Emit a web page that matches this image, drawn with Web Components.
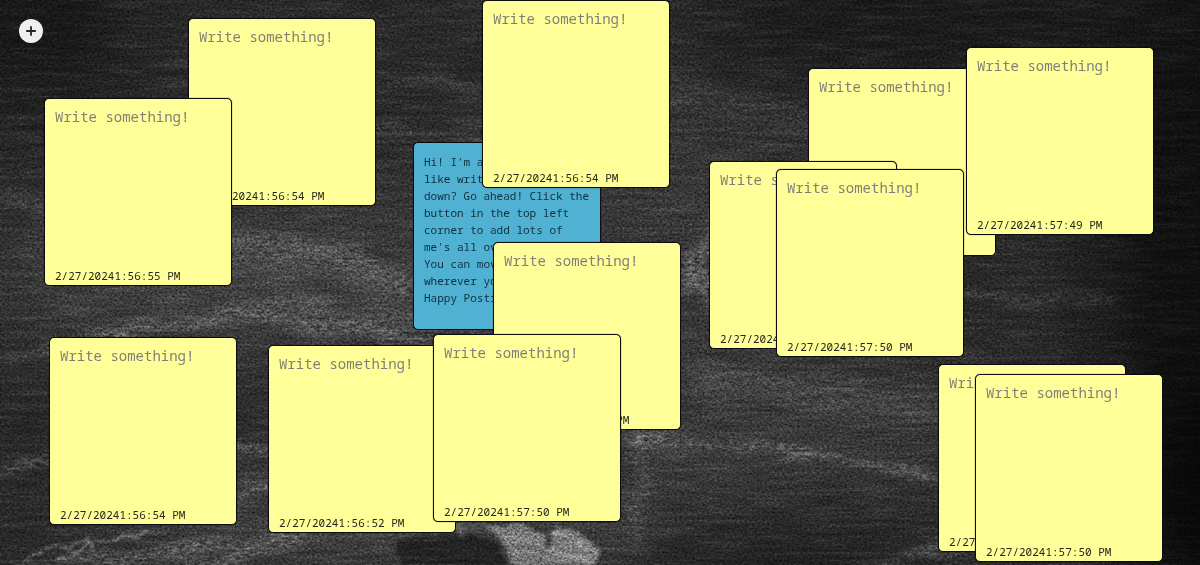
<!DOCTYPE html>
<html lang="en">
<head>
<meta charset="utf-8">
<meta name="viewport" content="width=device-width, initial-scale=1">
<title>Sticky notes</title>
<style>
  body { margin: 0; background: #222; font-family: "Noto Sans Mono", "DejaVu Sans Mono", monospace; }
</style>
</head>
<body>
<note-board>
  <add-button slot="action"></add-button>
  <sticky-note x="188" y="18" stamp="2/27/20241:56:54 PM"></sticky-note>
  <sticky-note x="44" y="98" stamp="2/27/20241:56:55 PM"></sticky-note>
  <sticky-note x="413" y="142" tone="blue">Hi! I'm a Post-It! Feel
like writing something
down? Go ahead! Click the
button in the top left
corner to add lots of
me's all over the page.
You can move me around
wherever you'd like.
Happy Posting!</sticky-note>
  <sticky-note x="482" y="0" stamp="2/27/20241:56:54 PM"></sticky-note>
  <sticky-note x="493" y="242" stamp="2/27/20241:56:53 PM"></sticky-note>
  <sticky-note x="49" y="337" stamp="2/27/20241:56:54 PM"></sticky-note>
  <sticky-note x="268" y="345" stamp="2/27/20241:56:52 PM"></sticky-note>
  <sticky-note x="433" y="334" stamp="2/27/20241:57:50 PM"></sticky-note>
  <sticky-note x="808" y="68" stamp="2/27/20241:57:49 PM"></sticky-note>
  <sticky-note x="709" y="161" stamp="2/27/20241:57:50 PM"></sticky-note>
  <sticky-note x="776" y="169" stamp="2/27/20241:57:50 PM"></sticky-note>
  <sticky-note x="966" y="47" stamp="2/27/20241:57:49 PM"></sticky-note>
  <sticky-note x="938" y="364" stamp="2/27/20241:57:50 PM"></sticky-note>
  <sticky-note x="975" y="374" stamp="2/27/20241:57:50 PM"></sticky-note>
</note-board>

<script>
class ChalkBackground extends HTMLElement {
  constructor() {
    super();
    this.attachShadow({ mode: "open" }).innerHTML = `
      <style>
        :host { display: block; }
        svg { display: block; width: 100%; height: 100%; }
        .drag { mix-blend-mode: soft-light; opacity: .25; }
        .grain { mix-blend-mode: overlay; opacity: .5; }
      </style>
      <svg viewBox="0 0 1200 565" preserveAspectRatio="xMidYMid slice" aria-hidden="true">
        <defs>
          <filter id="soft" x="-200" y="-200" width="1600" height="965" filterUnits="userSpaceOnUse" color-interpolation-filters="sRGB"><feGaussianBlur stdDeviation="40"/></filter>
          <filter id="mist" x="0" y="0" width="1200" height="565" filterUnits="userSpaceOnUse" color-interpolation-filters="sRGB">
            <feTurbulence type="fractalNoise" baseFrequency="0.015 0.06" numOctaves="3" seed="4" result="warp"/>
            <feDisplacementMap in="SourceGraphic" in2="warp" scale="26" xChannelSelector="R" yChannelSelector="G" result="bent"/>
            <feGaussianBlur in="bent" stdDeviation="6 4" result="fuzzy"/>
            <feTurbulence type="fractalNoise" baseFrequency="0.14 0.34" numOctaves="4" seed="9"/>
            <feColorMatrix values="0 0 0 0 1  0 0 0 0 1  0 0 0 0 1  2.0 0 0 0 -0.5" result="dust"/>
            <feComposite in="fuzzy" in2="dust" operator="in"/>
          </filter>
          <filter id="chalk" x="0" y="0" width="1200" height="565" filterUnits="userSpaceOnUse" color-interpolation-filters="sRGB">
            <feTurbulence type="fractalNoise" baseFrequency="0.05 0.09" numOctaves="3" seed="7" result="warp"/>
            <feDisplacementMap in="SourceGraphic" in2="warp" scale="14" xChannelSelector="R" yChannelSelector="G" result="bent"/>
            <feGaussianBlur in="bent" stdDeviation="1.5"/>
          </filter>
          <filter id="grain" x="0" y="0" width="1200" height="565" filterUnits="userSpaceOnUse" color-interpolation-filters="sRGB">
            <feTurbulence type="fractalNoise" baseFrequency="0.4 0.5" numOctaves="3" seed="21"/>
            <feColorMatrix values="1.5 0 0 0 -0.25  1.5 0 0 0 -0.25  1.5 0 0 0 -0.25  0 0 0 0 1"/>
          </filter>
          <filter id="drag" x="0" y="0" width="1200" height="565" filterUnits="userSpaceOnUse" color-interpolation-filters="sRGB">
            <feTurbulence type="fractalNoise" baseFrequency="0.02 0.25" numOctaves="3" seed="13"/>
            <feColorMatrix values="1.4 0 0 0 -0.2  1.4 0 0 0 -0.2  1.4 0 0 0 -0.2  0 0 0 0 1"/>
          </filter>
        </defs>
        <rect width="1200" height="565" fill="#2a2a2a"/>
        <g filter="url(#soft)">
          <ellipse cx="280" cy="280" rx="300" ry="80" fill="#414141"/>
          <ellipse cx="620" cy="230" rx="240" ry="130" fill="#383838"/>
          <ellipse cx="430" cy="520" rx="360" ry="60" fill="#404040"/>
          <ellipse cx="790" cy="420" rx="190" ry="80" fill="#3a3a3a"/>
          <ellipse cx="20" cy="20" rx="110" ry="80" fill="#171717"/>
          <ellipse cx="1220" cy="200" rx="120" ry="420" fill="#101010"/>
          <ellipse cx="960" cy="20" rx="260" ry="60" fill="#191919"/>
          <ellipse cx="760" cy="560" rx="130" ry="40" fill="#1c1c1c"/>
          <ellipse cx="1210" cy="500" rx="90" ry="120" fill="#080808"/>
        </g>
        <g filter="url(#mist)" fill="none" stroke-linecap="round">
          <path d="M-20 190Q120 230 250 240T480 335" stroke="#aaa" stroke-opacity=".25" stroke-width="20"/>
          <path d="M225 260Q330 240 420 300" stroke="#aaa" stroke-opacity=".2" stroke-width="40"/>
          <path d="M-10 365Q110 330 190 322T430 345" stroke="#bbb" stroke-opacity=".5" stroke-width="8"/>
          <path d="M225 310Q330 300 440 340" stroke="#bbb" stroke-opacity=".25" stroke-width="24"/>
          <path d="M-10 478Q60 450 130 450T440 455" stroke="#bbb" stroke-opacity=".5" stroke-width="10"/>
          <path d="M235 495Q250 480 290 485" stroke="#aaa" stroke-opacity=".35" stroke-width="14"/>
          <path d="M0 575Q120 560 210 545T480 525M140 575Q250 560 300 535" stroke="#bbb" stroke-opacity=".45" stroke-width="11"/>
          <path d="M685 290Q705 240 730 205M695 270Q705 285 730 320" stroke="#ddd" stroke-opacity=".45" stroke-width="16"/>
          <path d="M630 435Q760 445 850 460T940 475" stroke="#ccc" stroke-opacity=".5" stroke-width="10"/>
          <path d="M700 375Q800 395 930 405" stroke="#aaa" stroke-opacity=".2" stroke-width="36"/>
          <path d="M636 440L640 550" stroke="#bbb" stroke-opacity=".3" stroke-width="12"/>
          <path d="M960 290Q1040 298 1110 305" stroke="#aaa" stroke-opacity=".35" stroke-width="12"/>
          <path d="M378 130Q430 132 480 142M376 80L480 90" stroke="#aaa" stroke-opacity=".3" stroke-width="8"/>
          <path d="M670 90Q740 100 810 125" stroke="#aaa" stroke-opacity=".15" stroke-width="32"/>
          <path d="M860 575Q910 540 980 555" stroke="#aaa" stroke-opacity=".4" stroke-width="9"/>
        </g>
        <g filter="url(#chalk)">
          <path d="M478 522L520 524Q546 530 546 545Q545 558 530 570L512 570Q514 540 478 522Z" fill="#bbb" fill-opacity=".5"/>
          <path d="M555 524Q590 530 600 552L592 570L528 570Q550 560 555 524Z" fill="#bbb" fill-opacity=".5"/>
          <path d="M552 532Q580 540 598 556M542 548Q565 548 588 568" fill="none" stroke="#ddd" stroke-opacity=".6" stroke-width="2"/>
          <path d="M395 540Q460 525 500 545L508 570H400Z" fill="#0c0c0c" fill-opacity=".5"/>
          <path d="M20 562Q50 545 90 540T165 532M52 548L82 553M88 535L96 560M60 560L95 545" fill="none" stroke="#ddd" stroke-opacity=".45" stroke-width="2"/>
        </g>
        <rect class="drag" width="1200" height="565" filter="url(#drag)"/>
        <rect class="grain" width="1200" height="565" filter="url(#grain)"/>
      </svg>`;
  }
}
customElements.define("chalk-background", ChalkBackground);

class AddButton extends HTMLElement {
  constructor() {
    super();
    this.attachShadow({ mode: "open" }).innerHTML = `
      <style>
        :host { display: block; }
        button { display: grid; place-items: center; width: 24px; height: 24px; padding: 0; border: 0; border-radius: 50%; background: #efefef; cursor: pointer; }
        svg { display: block; }
      </style>
      <button type="button" aria-label="Add a note">
        <svg width="12" height="12" viewBox="0 0 12 12" fill="none" stroke="#222" stroke-width="1.8"><path d="M6 1.2V10.8M1.2 6H10.8"/></svg>
      </button>`;
  }
}
customElements.define("add-button", AddButton);

class StickyNote extends HTMLElement {
  constructor() {
    super();
    this.attachShadow({ mode: "open" });
  }
  connectedCallback() {
    this.style.left = this.getAttribute("x") + "px";
    this.style.top = this.getAttribute("y") + "px";
    const blue = this.getAttribute("tone") === "blue";
    const stamp = this.getAttribute("stamp");
    this.shadowRoot.innerHTML = `
      <style>
        :host { position: absolute; display: flex; flex-direction: column; box-sizing: border-box; width: 188px; height: 188px; padding: 9px 10px 2px; border: 1px solid #0c0c0c; border-radius: 5px; background: #ffff99; box-shadow: 0 0 1px #000; overflow: hidden; }
        :host([tone="blue"]) { padding-top: 10px; background: #50b1d3; }
        textarea { flex: 1; min-height: 0; width: 100%; padding: 0; border: 0; outline: 0; resize: none; background: none; color: #222; font-family: inherit; font-size: 14px; line-height: 18px; overflow: hidden; }
        textarea::placeholder { color: #7f7f78; opacity: 1; }
        time { font-size: 11px; line-height: 14px; color: #26261c; white-space: nowrap; }
        p { margin: 0; font-size: 11px; line-height: 17px; color: #10303c; white-space: pre; }
      </style>` + (blue
      ? `<p><slot></slot></p>`
      : `<textarea placeholder="Write something!" aria-label="Note text"></textarea><time>${stamp}</time>`);
  }
}
customElements.define("sticky-note", StickyNote);

class NoteBoard extends HTMLElement {
  constructor() {
    super();
    this.attachShadow({ mode: "open" }).innerHTML = `
      <style>
        :host { display: block; position: relative; min-height: 100vh; overflow: hidden; }
        chalk-background { position: absolute; inset: 0; }
        header { position: relative; display: flex; padding: 19px; }
      </style>
      <chalk-background></chalk-background>
      <header><slot name="action"></slot></header>
      <slot></slot>`;
  }
}
customElements.define("note-board", NoteBoard);
</script>
</body>
</html>
